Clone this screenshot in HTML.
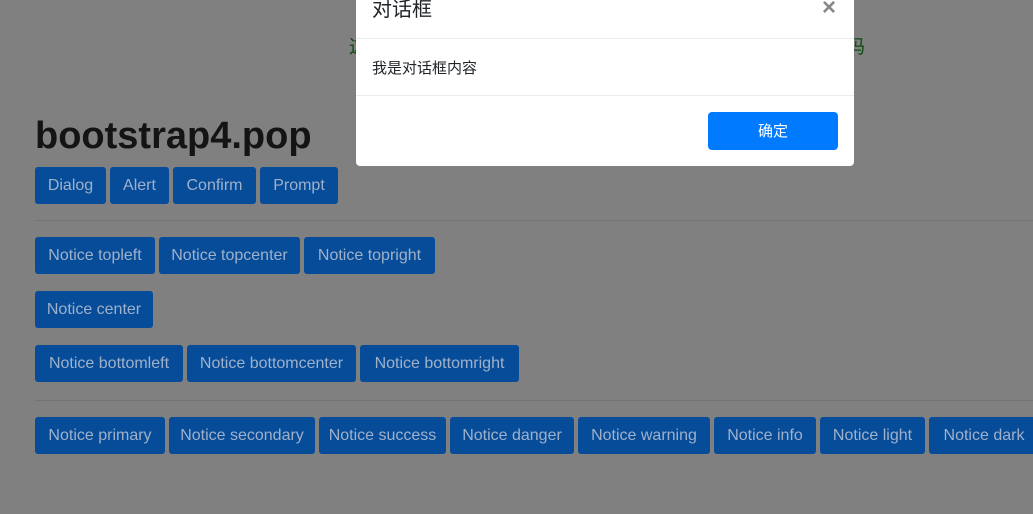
<!DOCTYPE html>
<html><head><meta charset="utf-8"><style>
body{margin:0;width:1033px;height:514px;background:#808080;position:relative;overflow:hidden;font-family:"Liberation Sans","Noto Sans CJK SC",sans-serif}
.b{position:absolute;height:37px;background:#064c99;color:#9fb1ca;border-radius:3px;font-size:16px;line-height:37px;text-align:center;white-space:nowrap;overflow:hidden}
.hr{position:absolute;left:35px;right:0;height:1px;background:#737373}
h1{position:absolute;left:35px;top:112px;margin:0;font-size:38px;font-weight:bold;color:#141414;line-height:48px}
.g{position:absolute;top:32px;color:#0f4a0f;font-size:19px}
.m{position:absolute;left:356px;top:-10px;width:498px;height:176px;background:#fff;border-radius:0 0 4px 4px}
</style></head><body>
<div class="g" style="left:349px">这</div><div class="g" style="left:846px">码</div>
<h1>bootstrap4.pop</h1>
<div class="b" style="left:35px;top:167px;width:71px">Dialog</div>
<div class="b" style="left:110px;top:167px;width:59px">Alert</div>
<div class="b" style="left:173px;top:167px;width:83px">Confirm</div>
<div class="b" style="left:260px;top:167px;width:78px">Prompt</div>
<div class="hr" style="top:220px"></div>
<div class="b" style="left:35px;top:237px;width:120px">Notice topleft</div>
<div class="b" style="left:159px;top:237px;width:141px">Notice topcenter</div>
<div class="b" style="left:304px;top:237px;width:131px">Notice topright</div>
<div class="b" style="left:35px;top:291px;width:118px">Notice center</div>
<div class="b" style="left:35px;top:345px;width:148px">Notice bottomleft</div>
<div class="b" style="left:187px;top:345px;width:169px">Notice bottomcenter</div>
<div class="b" style="left:360px;top:345px;width:159px">Notice bottomright</div>
<div class="hr" style="top:400px"></div>
<div class="b" style="left:35px;top:417px;width:130px">Notice primary</div>
<div class="b" style="left:169px;top:417px;width:146px">Notice secondary</div>
<div class="b" style="left:319px;top:417px;width:127px">Notice success</div>
<div class="b" style="left:450px;top:417px;width:124px">Notice danger</div>
<div class="b" style="left:578px;top:417px;width:132px">Notice warning</div>
<div class="b" style="left:714px;top:417px;width:102px">Notice info</div>
<div class="b" style="left:820px;top:417px;width:105px">Notice light</div>
<div class="b" style="left:929px;top:417px;width:110px;border-radius:3px 0 0 3px">Notice dark</div>
<div class="m">
 <div style="position:absolute;left:16px;top:3px;font-size:20px;color:#212529">对话框</div>
 <div style="position:absolute;left:466px;top:4px;font-size:24px;color:#888;font-weight:bold">×</div>
 <div style="position:absolute;left:0;right:0;top:48px;height:1px;background:#e9ecef"></div>
 <div style="position:absolute;left:16px;top:67px;font-size:15px;color:#212529">我是对话框内容</div>
 <div style="position:absolute;left:0;right:0;top:105px;height:1px;background:#e9ecef"></div>
 <div style="position:absolute;left:352px;top:122px;width:130px;height:38px;background:#007bff;border-radius:4px;color:#fff;font-size:15px;line-height:40px;text-align:center">确定</div>
</div>
</body></html>
